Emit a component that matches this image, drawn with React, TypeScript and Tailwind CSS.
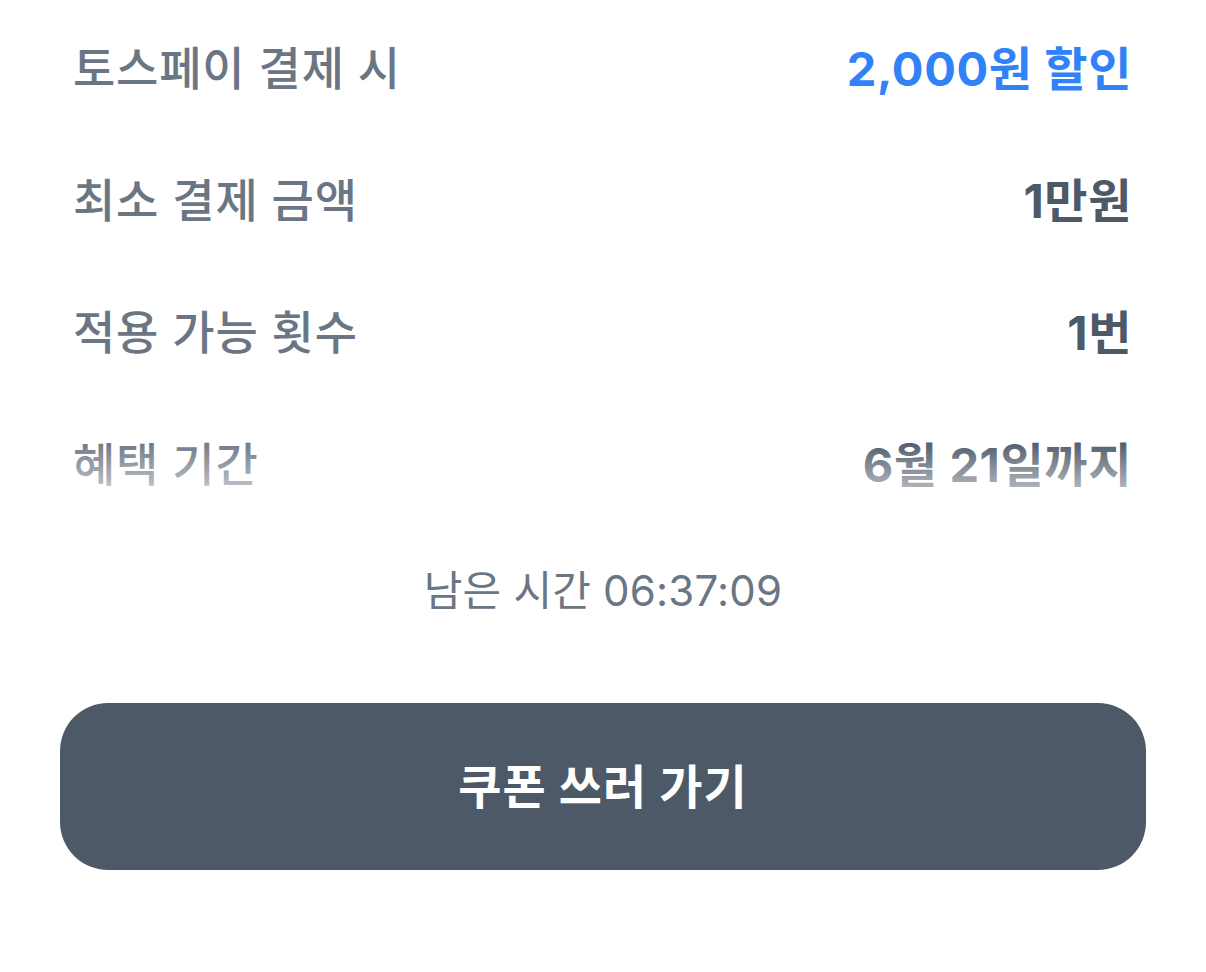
import React from "react";

const rows = [
  { label: "토스페이 결제 시", value: "2,000원 할인", blue: true },
  { label: "최소 결제 금액", value: "1만원" },
  { label: "적용 가능 횟수", value: "1번" },
  { label: "혜택 기간", value: "6월 21일까지" },
];

export default function App() {
  return (
    <div
      className="w-[1206px] h-[972px] bg-white flex flex-col"
      style={{ fontFamily: 'Inter, "Noto Sans CJK KR", "Noto Sans", sans-serif' }}
    >
      <div className="relative flex flex-col pt-[2px] pl-[73px] pr-[74px]">
        {rows.map((r) => (
          <div key={r.label} className="h-[132px] flex items-center justify-between">
            <span className="text-[46px] leading-none text-[#6b7684] font-medium tracking-[0.8px]">
              {r.label}
            </span>
            <span
              className={
                "text-[47px] leading-none font-bold tracking-[0.6px] " +
                (r.blue ? "text-[#3182f6]" : "text-[#4e5968]")
              }
            >
              {r.value}
            </span>
          </div>
        ))}
        <div className="absolute left-0 right-0 top-[440px] h-[52px] bg-gradient-to-b from-white/0 to-white/60" />
      </div>
      <div className="flex justify-center mt-[40px]">
        <span className="text-[42px] leading-none text-[#6b7684] tracking-[0.2px]">남은 시간 06:37:09</span>
      </div>
      <div className="px-[60px] mt-[91px]">
        <div className="h-[167px] rounded-[48px] bg-[#4e5968] flex items-center justify-center">
          <span className="text-[47px] leading-none font-bold text-white tracking-[1px]">쿠폰 쓰러 가기</span>
        </div>
      </div>
    </div>
  );
}
